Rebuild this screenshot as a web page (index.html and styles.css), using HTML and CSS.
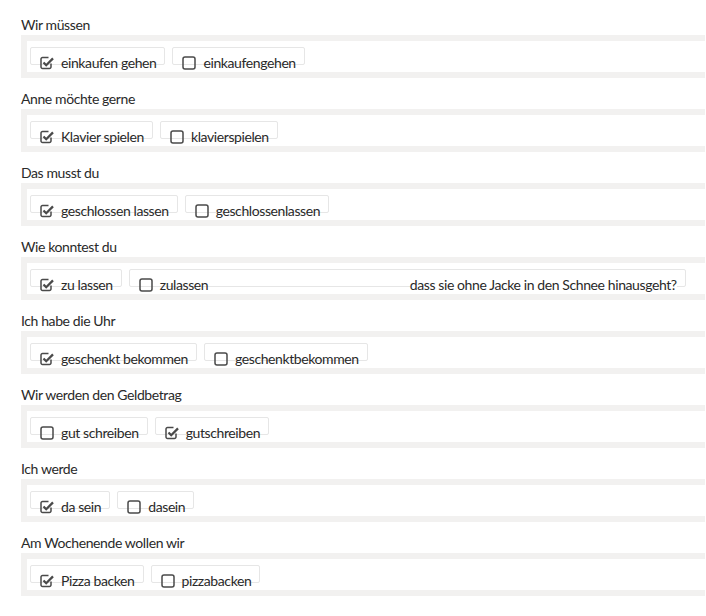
FILE: index.html
```html
<!DOCTYPE html>
<html lang="de">
<head>
<meta charset="utf-8">
<link rel="stylesheet" href="styles.css">
</head>
<body>
<svg width="0" height="0" class="defs">
  <defs>
    <symbol id="cb-off" viewBox="0 0 14 14">
      <rect x="1" y="1" width="12" height="12" rx="2" fill="none" stroke="#4a4a4a" stroke-width="1.5"/>
    </symbol>
    <symbol id="cb-on" viewBox="0 0 14 14">
      <path d="M11 7.5 V11 a1.5 1.5 0 0 1 -1.5 1.5 H2.5 A1.5 1.5 0 0 1 1 11 V3 a1.5 1.5 0 0 1 1.5 -1.5 H8.5" fill="none" stroke="#4a4a4a" stroke-width="1.5"/>
      <path d="M3.5 6.5 L6.2 9.2 L13 2.4" fill="none" stroke="#4a4a4a" stroke-width="2.3"/>
    </symbol>
  </defs>
</svg>
<main class="page">
  <section class="group">
    <div class="label">Wir müssen</div>
    <div class="band"><div class="inner">
      <label class="chip"><span class="cnt"><svg class="cb"><use href="#cb-on"/></svg><span>einkaufen gehen</span></span></label>
      <label class="chip"><span class="cnt"><svg class="cb"><use href="#cb-off"/></svg><span>einkaufengehen</span></span></label>
    </div></div>
  </section>
  <section class="group">
    <div class="label">Anne möchte gerne</div>
    <div class="band"><div class="inner">
      <label class="chip"><span class="cnt"><svg class="cb"><use href="#cb-on"/></svg><span>Klavier spielen</span></span></label>
      <label class="chip"><span class="cnt"><svg class="cb"><use href="#cb-off"/></svg><span>klavierspielen</span></span></label>
    </div></div>
  </section>
  <section class="group">
    <div class="label">Das musst du</div>
    <div class="band"><div class="inner">
      <label class="chip"><span class="cnt"><svg class="cb"><use href="#cb-on"/></svg><span>geschlossen lassen</span></span></label>
      <label class="chip"><span class="cnt"><svg class="cb"><use href="#cb-off"/></svg><span>geschlossenlassen</span></span></label>
    </div></div>
  </section>
  <section class="group">
    <div class="label">Wie konntest du</div>
    <div class="band"><div class="inner">
      <label class="chip"><span class="cnt"><svg class="cb"><use href="#cb-on"/></svg><span>zu lassen</span></span></label>
      <label class="chip wide"><span class="cnt"><svg class="cb"><use href="#cb-off"/></svg><span>zulassen</span></span><span class="tail">dass sie ohne Jacke in den Schnee hinausgeht?</span></label>
    </div></div>
  </section>
  <section class="group">
    <div class="label">Ich habe die Uhr</div>
    <div class="band"><div class="inner">
      <label class="chip"><span class="cnt"><svg class="cb"><use href="#cb-on"/></svg><span>geschenkt bekommen</span></span></label>
      <label class="chip"><span class="cnt"><svg class="cb"><use href="#cb-off"/></svg><span>geschenktbekommen</span></span></label>
    </div></div>
  </section>
  <section class="group">
    <div class="label">Wir werden den Geldbetrag</div>
    <div class="band"><div class="inner">
      <label class="chip"><span class="cnt"><svg class="cb"><use href="#cb-off"/></svg><span>gut schreiben</span></span></label>
      <label class="chip"><span class="cnt"><svg class="cb"><use href="#cb-on"/></svg><span>gutschreiben</span></span></label>
    </div></div>
  </section>
  <section class="group">
    <div class="label">Ich werde</div>
    <div class="band"><div class="inner">
      <label class="chip"><span class="cnt"><svg class="cb"><use href="#cb-on"/></svg><span>da sein</span></span></label>
      <label class="chip"><span class="cnt"><svg class="cb"><use href="#cb-off"/></svg><span>dasein</span></span></label>
    </div></div>
  </section>
  <section class="group">
    <div class="label">Am Wochenende wollen wir</div>
    <div class="band"><div class="inner">
      <label class="chip"><span class="cnt"><svg class="cb"><use href="#cb-on"/></svg><span>Pizza backen</span></span></label>
      <label class="chip"><span class="cnt"><svg class="cb"><use href="#cb-off"/></svg><span>pizzabacken</span></span></label>
    </div></div>
  </section>
</main>
</body>
</html>
```
FILE: styles.css
```css
html, body {
  margin: 0;
  padding: 0;
  background: #fff;
  overflow: hidden;
}
body {
  font-family: Lato, "Open Sans", sans-serif;
  font-size: 14px;
  letter-spacing: -0.4px;
  color: #2a2a2a;
}
.defs {
  position: absolute;
  width: 0;
  height: 0;
}
.page {
  padding: 15px 0 0 21px;
}
.group {
  margin-bottom: 11px;
}
.label {
  line-height: 20px;
  height: 20px;
}
.band {
  background: #f2f1f0;
  padding: 6px 0 6px 6px;
  margin-right: 1px;
}
.inner {
  background: #fff;
  height: 19px;
  padding: 6px 3px;
  display: flex;
  gap: 7px;
}
.chip {
  box-sizing: border-box;
  height: 18px;
  border: 1px solid #e6e6e6;
  border-radius: 2px;
  padding: 0 8px 0 9px;
  display: flex;
  align-items: flex-start;
}
.cnt {
  margin-top: 8px;
  display: flex;
  align-items: center;
  gap: 7px;
  line-height: 14px;
  white-space: nowrap;
}
.cb {
  width: 14px;
  height: 14px;
  flex: none;
}
.wide {
  width: 557px;
}
.tail {
  margin-left: auto;
  margin-top: 8px;
  line-height: 14px;
  background: #fff;
  white-space: nowrap;
}
```
